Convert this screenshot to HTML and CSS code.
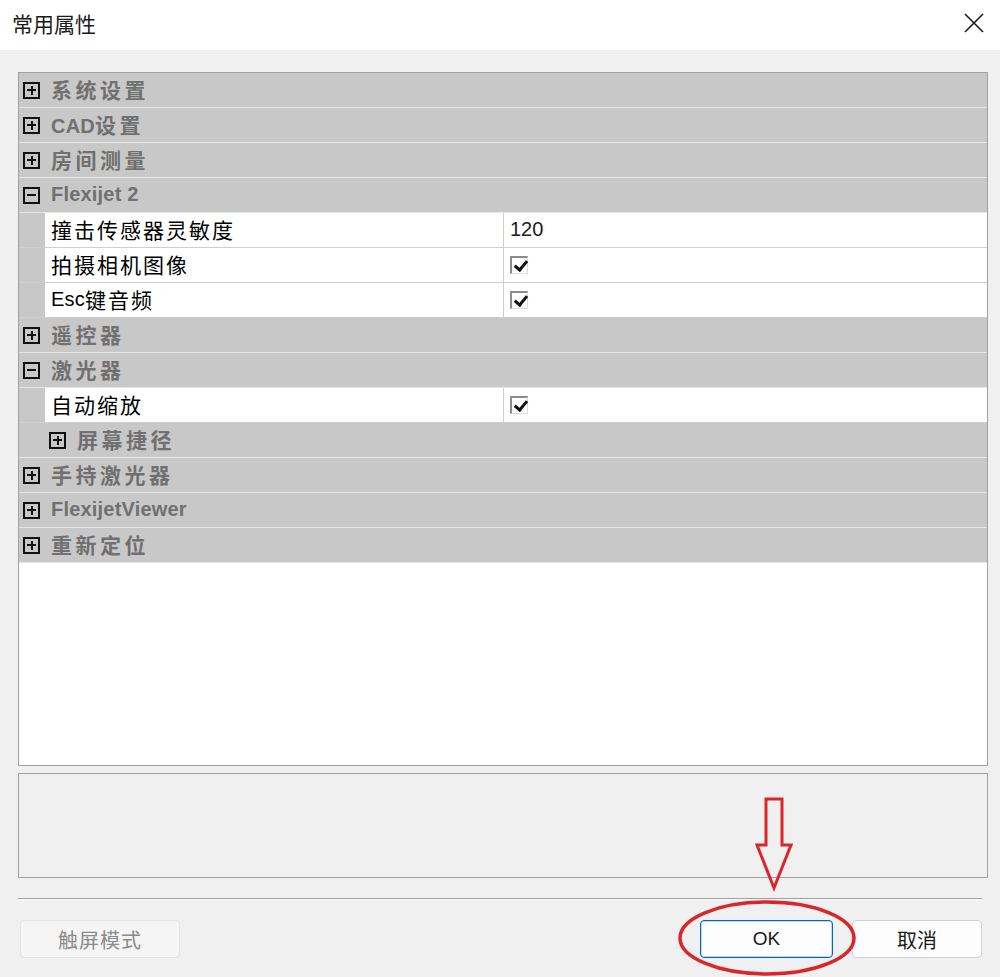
FILE: index.html
```html
<!DOCTYPE html>
<html lang="zh-CN">

<head>
    <meta charset="UTF-8">
    <meta name="viewport" content="width=device-width, initial-scale=1.0">
    <title>常用属性</title>
    <link rel="stylesheet" href="styles.css">
</head>

<body>

    <div class="janela">
        <div class="barra-titulo">
            <span class="titulo">常用属性</span>
            <svg class="fechar" width="20" height="20" viewBox="0 0 20 20">
                <path d="M1 1 L19 19 M19 1 L1 19" stroke="#1a1a1a" stroke-width="1.6" fill="none" />
            </svg>
        </div>

        <div class="corpo">
            <div class="grade">
                <div class="categoria"><span class="mais"></span><span class="rotulo">系统设置</span></div>
                <div class="categoria"><span class="mais"></span><span class="rotulo"><span class="lat">CAD</span>设置</span></div>
                <div class="categoria"><span class="mais"></span><span class="rotulo">房间测量</span></div>
                <div class="categoria"><span class="menos"></span><span class="rotulo"><span class="lat">Flexijet 2</span></span></div>
                <div class="propriedade">
                    <div class="margem"></div>
                    <div class="nome">撞击传感器灵敏度</div>
                    <div class="valor">120</div>
                </div>
                <div class="propriedade">
                    <div class="margem"></div>
                    <div class="nome">拍摄相机图像</div>
                    <div class="valor"><span class="caixa-check"></span></div>
                </div>
                <div class="propriedade">
                    <div class="margem"></div>
                    <div class="nome"><span class="lat">Esc</span>键音频</div>
                    <div class="valor"><span class="caixa-check"></span></div>
                </div>
                <div class="categoria"><span class="mais"></span><span class="rotulo">遥控器</span></div>
                <div class="categoria"><span class="menos"></span><span class="rotulo">激光器</span></div>
                <div class="propriedade">
                    <div class="margem"></div>
                    <div class="nome">自动缩放</div>
                    <div class="valor"><span class="caixa-check"></span></div>
                </div>
                <div class="categoria sub"><span class="mais"></span><span class="rotulo">屏幕捷径</span></div>
                <div class="categoria"><span class="mais"></span><span class="rotulo">手持激光器</span></div>
                <div class="categoria"><span class="mais"></span><span class="rotulo"><span class="lat">FlexijetViewer</span></span></div>
                <div class="categoria"><span class="mais"></span><span class="rotulo">重新定位</span></div>
            </div>

            <div class="descricao"></div>

            <div class="separador"></div>

            <div class="botoes">
                <button class="botao desativado">触屏模式</button>
                <div class="espaco"></div>
                <button class="botao ok">OK</button>
                <button class="botao">取消</button>
            </div>
        </div>
    </div>

    <svg class="anotacao" width="1000" height="977" viewBox="0 0 1000 977">
        <path d="M766 799 L782 799 L782 845 L791 845 L774 888 L757 845 L766 845 Z" fill="none" stroke="#d9262b"
            stroke-width="3" stroke-linejoin="miter" />
        <ellipse cx="767" cy="938" rx="87" ry="36" fill="none" stroke="#d9262b" stroke-width="3.5" />
    </svg>

</body>

</html>
```

FILE: styles.css
```css
* {
    margin: 0;
    padding: 0;
    box-sizing: border-box;
    font-family: "Liberation Sans", "Noto Sans CJK SC", sans-serif;
}

body {
    width: 1000px;
    height: 977px;
    background-color: #f0f0f0;
    overflow: hidden;
    position: relative;
}

.barra-titulo {
    height: 50px;
    background-color: white;
    display: flex;
    align-items: center;
    justify-content: space-between;
    padding: 0 16px 4px 12px;
}

.titulo {
    font-size: 21px;
    color: #1a1a1a;
}

.corpo {
    padding: 22px 12px 0 18px;
}

.grade {
    height: 694px;
    border: 1px solid #a0a0a0;
    background-color: white;
}

.categoria {
    height: 35px;
    background-color: #c8c8c8;
    border-bottom: 1px solid #e6e6e6;
    display: flex;
    align-items: center;
    padding-left: 4px;
    padding-bottom: 2px;
}

.categoria.sub {
    padding-left: 30px;
}

.mais,
.menos {
    width: 17px;
    height: 17px;
    border: 2px solid #111;
    position: relative;
    margin-right: 11px;
    margin-top: 2px;
}

.mais::before,
.menos::before {
    content: "";
    position: absolute;
    left: 2px;
    right: 2px;
    top: 5.5px;
    height: 2px;
    background-color: #111;
}

.mais::after {
    content: "";
    position: absolute;
    top: 2px;
    bottom: 2px;
    left: 5.5px;
    width: 2px;
    background-color: #111;
}

.rotulo {
    font-size: 21px;
    font-weight: bold;
    color: #707070;
    letter-spacing: 3.5px;
}

.lat {
    font-size: 20px;
    letter-spacing: 0.2px;
}

.propriedade {
    height: 35px;
    display: flex;
    border-bottom: 1px solid #cfcfcf;
}

.margem {
    width: 26px;
    background-color: #c8c8c8;
}

.nome {
    width: 459px;
    border-right: 1px solid #cfcfcf;
    font-size: 21px;
    letter-spacing: 2px;
    color: black;
    padding-left: 6px;
    padding-bottom: 2px;
    display: flex;
    align-items: center;
}

.valor {
    flex: 1;
    font-size: 20px;
    color: #1a1a1a;
    padding-left: 6px;
    padding-bottom: 2px;
    display: flex;
    align-items: center;
}

.caixa-check {
    width: 18px;
    height: 18px;
    border-top: 2px solid #8c8c8c;
    border-left: 2px solid #8c8c8c;
    border-right: 1px solid #dcdcdc;
    border-bottom: 1px solid #dcdcdc;
    background-color: white;
    position: relative;
    margin-top: 2px;
}

.caixa-check::after {
    content: "";
    position: absolute;
    left: 5px;
    top: 0px;
    width: 5px;
    height: 10px;
    border-right: 3px solid #111;
    border-bottom: 3px solid #111;
    transform: rotate(40deg);
}

.descricao {
    height: 105px;
    margin-top: 7px;
    border: 1px solid #a0a0a0;
    background-color: #f0f0f0;
}

.separador {
    height: 2px;
    margin-top: 20px;
    margin-right: 6px;
    border-top: 1px solid #a0a0a0;
    border-bottom: 1px solid #fbfbfb;
}

.botoes {
    display: flex;
    margin-top: 20px;
    padding-left: 2px;
    padding-right: 6px;
}

.espaco {
    flex: 1;
}

.botao {
    height: 38px;
    width: 130px;
    background-color: #fdfdfd;
    border: 1px solid #d0d0d0;
    border-radius: 4px;
    font-size: 20px;
    color: #1a1a1a;
}

.botao.desativado {
    width: 160px;
    background-color: #f5f5f5;
    border-color: #e2e2e2;
    color: #8a8a8a;
    letter-spacing: 1px;
}

.botao.ok {
    width: 133px;
    margin-right: 19px;
    border: 1px solid #0067c0;
    box-shadow: inset 0 0 0 1px #bcd7ef;
    font-size: 19px;
}

.anotacao {
    position: absolute;
    left: 0;
    top: 0;
    pointer-events: none;
}
```
